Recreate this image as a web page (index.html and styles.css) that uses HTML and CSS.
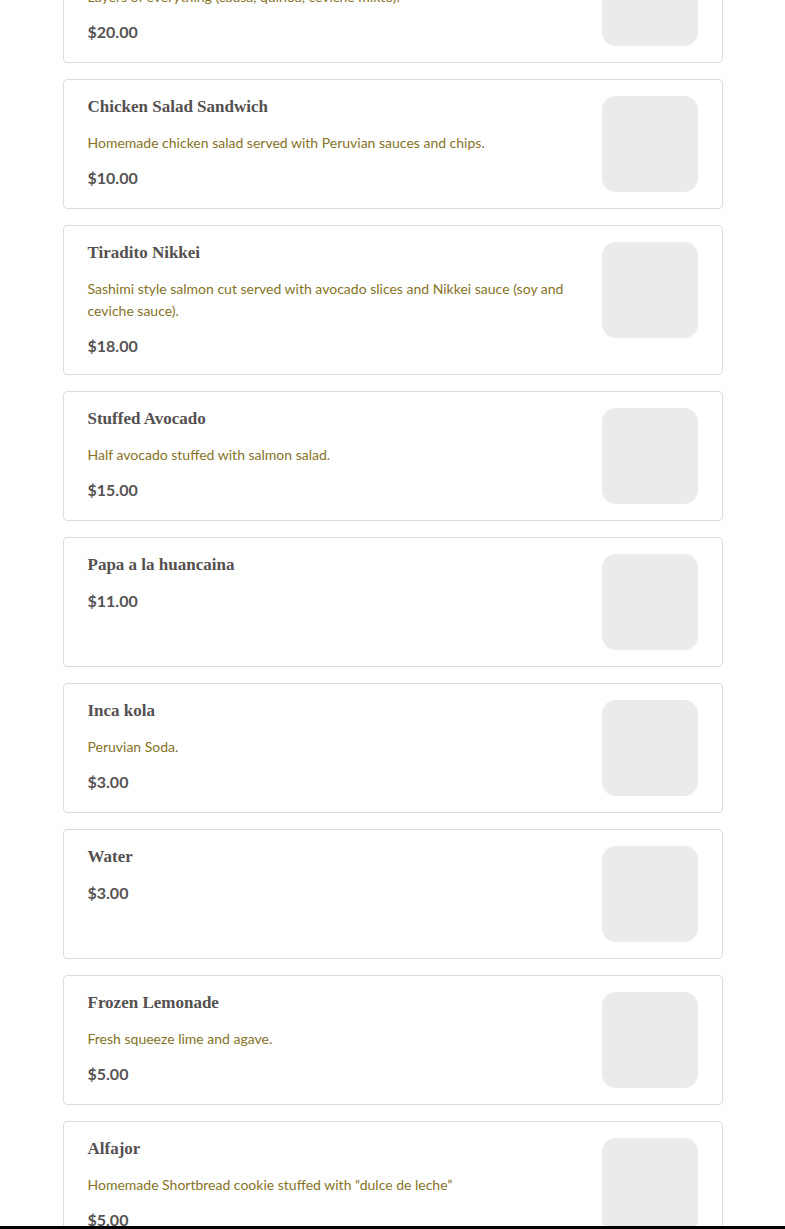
FILE: index.html
```html
<!DOCTYPE html>
<html lang="en">
<head>
<meta charset="utf-8">
<title>Menu</title>
<link rel="stylesheet" href="styles.css">
</head>
<body>
<main class="menu">
  <article class="item">
    <div class="info">
      <h3 class="name">Causa Nikkei</h3>
      <p class="desc">Layers of everything (causa, quinoa, ceviche mixto).</p>
      <p class="price">$20.00</p>
    </div>
    <div class="thumb"></div>
  </article>
  <article class="item">
    <div class="info">
      <h3 class="name">Chicken Salad Sandwich</h3>
      <p class="desc">Homemade chicken salad served with Peruvian sauces and chips.</p>
      <p class="price">$10.00</p>
    </div>
    <div class="thumb"></div>
  </article>
  <article class="item">
    <div class="info">
      <h3 class="name">Tiradito Nikkei</h3>
      <p class="desc">Sashimi style salmon cut served with avocado slices and Nikkei sauce (soy and ceviche sauce).</p>
      <p class="price">$18.00</p>
    </div>
    <div class="thumb"></div>
  </article>
  <article class="item">
    <div class="info">
      <h3 class="name">Stuffed Avocado</h3>
      <p class="desc">Half avocado stuffed with salmon salad.</p>
      <p class="price">$15.00</p>
    </div>
    <div class="thumb"></div>
  </article>
  <article class="item">
    <div class="info">
      <h3 class="name">Papa a la huancaina</h3>
      <p class="price">$11.00</p>
    </div>
    <div class="thumb"></div>
  </article>
  <article class="item">
    <div class="info">
      <h3 class="name">Inca kola</h3>
      <p class="desc">Peruvian Soda.</p>
      <p class="price">$3.00</p>
    </div>
    <div class="thumb"></div>
  </article>
  <article class="item">
    <div class="info">
      <h3 class="name">Water</h3>
      <p class="price">$3.00</p>
    </div>
    <div class="thumb"></div>
  </article>
  <article class="item">
    <div class="info">
      <h3 class="name">Frozen Lemonade</h3>
      <p class="desc">Fresh squeeze lime and agave.</p>
      <p class="price">$5.00</p>
    </div>
    <div class="thumb"></div>
  </article>
  <article class="item">
    <div class="info">
      <h3 class="name">Alfajor</h3>
      <p class="desc">Homemade Shortbread cookie stuffed with “dulce de leche”</p>
      <p class="price">$5.00</p>
    </div>
    <div class="thumb"></div>
  </article>
  <article class="item">
    <div class="info">
      <h3 class="name">Chicha Morada</h3>
      <p class="desc">Purple corn drink.</p>
      <p class="price">$4.00</p>
    </div>
    <div class="thumb"></div>
  </article>
</main>
<div class="bottom-bar"></div>
</body>
</html>
```

FILE: styles.css
```css
html, body {
  margin: 0;
  padding: 0;
  background: #fff;
  overflow: hidden;
}

.menu {
  width: 660px;
  margin: -67px auto 0;
  display: flex;
  flex-direction: column;
  gap: 16px;
}

.item {
  display: flex;
  gap: 24px;
  border: 1px solid #dcdcdc;
  border-radius: 4px;
  padding: 16px 24px;
  background: #fff;
}

.info {
  flex: 1;
  min-width: 0;
}

.name {
  margin: 0 0 14px;
  font-family: "Liberation Serif", serif;
  font-weight: 700;
  font-size: 17px;
  line-height: 22px;
  letter-spacing: 0;
  color: #555050;
}

.desc {
  margin: 0 0 13px;
  font-family: "Lato", sans-serif;
  font-size: 14px;
  line-height: 22px;
  color: #86731f;
}

.price {
  margin: 0 0 1px;
  font-family: "Lato", sans-serif;
  font-weight: 700;
  font-size: 16px;
  line-height: 22px;
  color: #575353;
}

.name + .price {
  margin-top: 1px;
}

.thumb {
  flex: 0 0 96px;
  width: 96px;
  height: 96px;
  border-radius: 14px;
  background: #ebebeb;
}

.bottom-bar {
  position: fixed;
  left: 0;
  right: 0;
  bottom: 0;
  height: 3px;
  background: #000;
}
```
